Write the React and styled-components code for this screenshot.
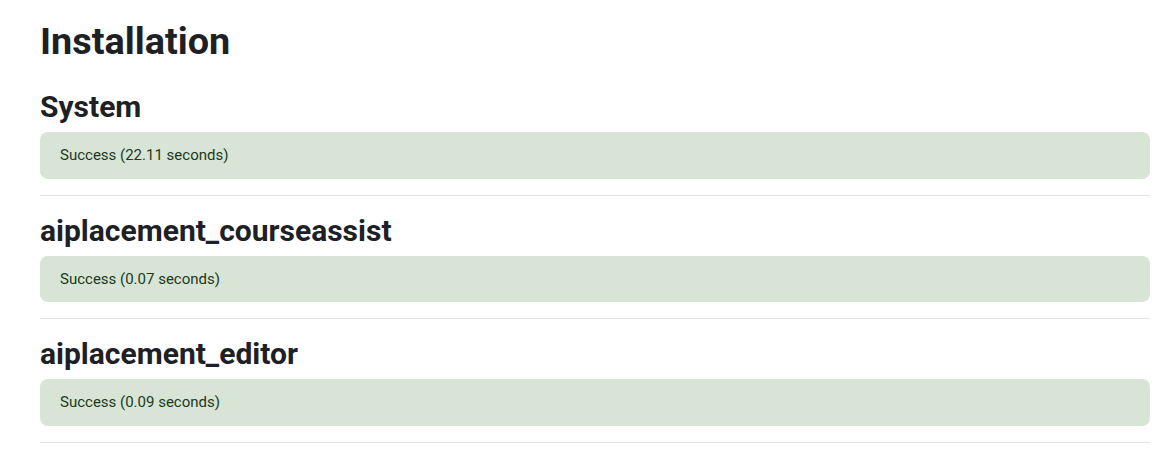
import React from "react";
import styled, { createGlobalStyle } from "styled-components";

const GlobalStyle = createGlobalStyle`
  html, body {
    margin: 0;
    padding: 0;
    background: #fff;
  }
  body {
    font-family: Roboto, "Liberation Sans", sans-serif;
    color: #1d2125;
    font-size: 15px;
    line-height: 1.5;
  }
`;

const Page = styled.div`
  padding: 19px 12px 0 40px;
`;

const Title = styled.h1`
  margin: 0 0 24px;
  font-size: 37.8px;
  font-weight: 700;
  line-height: 1.2;
  color: #1d2125;
`;

const Section = styled.section`
  display: flex;
  flex-direction: column;
`;

const Heading = styled.h2`
  margin: 0 0 6px;
  font-size: 30px;
  font-weight: 700;
  line-height: 38px;
  color: #1d2125;
`;

const Alert = styled.div`
  padding: 13px 20px 12px;
  border-radius: 8px;
  background: #d7e4d6;
  color: #1c3a1b;
  font-size: 15px;
  line-height: 21.5px;
`;

const Rule = styled.hr`
  margin: 16px 0 16px;
  border: 0;
  border-top: 1px solid #e5e5e5;
`;

const results = [
  { name: "System", time: "22.11" },
  { name: "aiplacement_courseassist", time: "0.07" },
  { name: "aiplacement_editor", time: "0.09" },
];

export default function App() {
  return (
    <>
      <GlobalStyle />
      <Page>
        <Title>Installation</Title>
        {results.map((r) => (
          <Section key={r.name}>
            <Heading>{r.name}</Heading>
            <Alert>Success ({r.time} seconds)</Alert>
            <Rule />
          </Section>
        ))}
      </Page>
    </>
  );
}
